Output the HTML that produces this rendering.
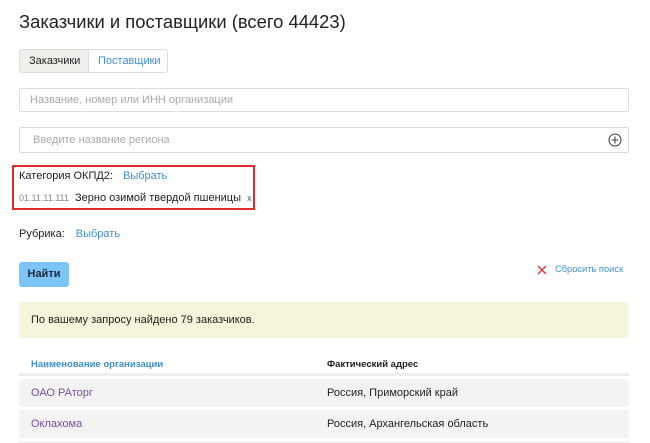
<!DOCTYPE html>
<html><head><meta charset="utf-8"><style>
*{box-sizing:border-box;margin:0;padding:0}
html,body{width:650px;height:443px;overflow:hidden}
body{background:#fff;font-family:"Liberation Sans",sans-serif;color:#222;position:relative;font-size:11px}
.a{position:absolute}
.h1{left:19px;top:11px;font-size:18.4px;color:#222}
.tab{top:49px;height:24px;font-size:11px;line-height:22px;border:1px solid #ddd;padding:0 9px}
.inp{left:19px;width:610px;border:1px solid #ddd;border-radius:2px;font-size:11px;color:#aaa;padding-left:10px}
.lnk{color:#3d8fd6}
.row{left:19px;width:610px;height:28px;background:#f3f3f3;border-radius:3px;font-size:11px;line-height:28px}
</style></head><body>
<div class="a h1">Заказчики и поставщики (всего 44423)</div>
<div class="a tab" style="left:19px;width:70px;background:#efefec;border-radius:3px 0 0 3px">Заказчики</div>
<div class="a tab lnk" style="left:88px;width:80px;border-radius:0 3px 3px 0">Поставщики</div>
<div class="a inp" style="top:88px;height:24px;line-height:22px">Название, номер или ИНН организации</div>
<div class="a inp" style="top:127px;height:26px;line-height:24px;padding-left:13px">Введите название региона</div>
<svg class="a" style="left:608px;top:133px" width="14" height="14" viewBox="0 0 14 14"><circle cx="7" cy="7" r="6" fill="none" stroke="#444" stroke-width="1.1"/><path d="M7 3.5v7M3.5 7h7" stroke="#444" stroke-width="1.1"/></svg>
<div class="a" style="left:12px;top:165px;width:243px;height:45px;border:2px solid #e32b2b"></div>
<div class="a" style="left:19px;top:170px;font-size:11px">Категория ОКПД2:<span class="lnk" style="margin-left:10px">Выбрать</span></div>
<div class="a" style="left:19px;top:192px;font-size:11px"><span style="color:#888;font-size:9px">01.11.11.111</span>&nbsp; Зерно озимой твердой пшеницы&nbsp;&nbsp;<span style="font-size:9px;color:#555">x</span></div>
<div class="a" style="left:19px;top:228px;font-size:11px">Рубрика:<span class="lnk" style="margin-left:11px">Выбрать</span></div>
<div class="a" style="left:19px;top:262px;width:50px;height:25px;background:#7cc4f7;border-radius:3px;font-size:11px;font-weight:bold;line-height:25px;text-align:center;color:#1a2a3a">Найти</div>
<svg class="a" style="left:537px;top:265px" width="10" height="10" viewBox="0 0 10 10"><path d="M1 1l8 8M9 1l-8 8" stroke="#e0303a" stroke-width="1.3"/></svg>
<div class="a lnk" style="left:555px;top:264px;font-size:9.3px">Сбросить поиск</div>
<div class="a" style="left:19px;top:302px;width:610px;height:36px;background:#f5f5dc;border-radius:3px;font-size:11px;line-height:36px;padding-left:12px">По вашему запросу найдено 79 заказчиков.</div>
<div class="a" style="left:31px;top:359px;font-size:9.5px;font-weight:bold;color:#3d8fd6">Наименование организации</div>
<div class="a" style="left:327px;top:359px;font-size:9.5px;font-weight:bold">Фактический адрес</div>
<div class="a" style="left:19px;top:373px;width:610px;height:3px;background:#eee"></div>
<div class="a row" style="top:379px"><span style="position:absolute;left:12px;color:#7b4ea6">ОАО РАторг</span><span style="position:absolute;left:308px">Россия, Приморский край</span></div>
<div class="a row" style="top:410px"><span style="position:absolute;left:12px;color:#7b4ea6">Оклахома</span><span style="position:absolute;left:308px">Россия, Архангельская область</span></div>
<div class="a" style="left:19px;top:441px;width:610px;height:2px;background:#f3f3f3"></div>
</body></html>
